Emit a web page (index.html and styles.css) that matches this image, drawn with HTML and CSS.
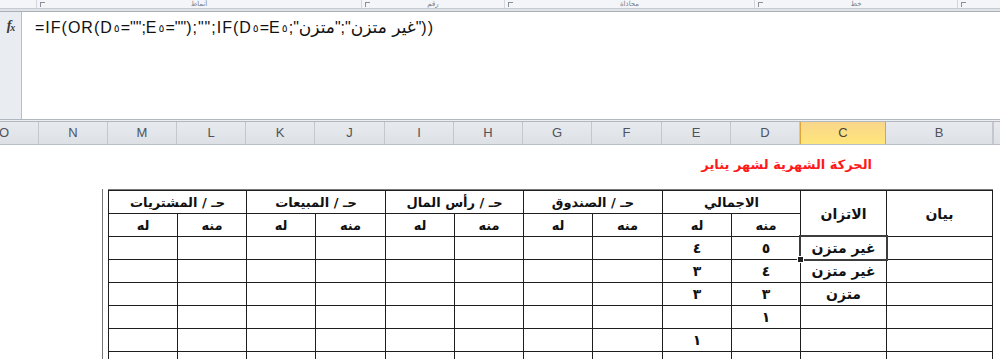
FILE: index.html
```html
<!DOCTYPE html>
<html>
<head>
    <meta charset="utf-8">
    <title>الحركة الشهرية</title>
    <link rel="stylesheet" href="styles.css">
</head>
<body>
    <div class="ribbon">
        <div class="group group-cells"></div>
        <div class="group group-styles"><span class="launcher"></span><span class="group-name">أنماط</span></div>
        <div class="group group-number"><span class="launcher"></span><span class="group-name">رقم</span></div>
        <div class="group group-align"><span class="launcher"></span><span class="group-name">محاذاة</span></div>
        <div class="group group-font"><span class="launcher"></span><span class="group-name">خط</span></div>
        <div class="group group-clip"><span class="launcher"></span></div>
    </div>
    <div class="ribbon-gap"></div>

    <div class="formula-bar">
        <div class="fx">f<sub>x</sub></div>
        <div class="formula" dir="ltr">=IF(OR(D<span class="dg">٥</span>="";E<span class="dg">٥</span>="");"";IF(D<span class="dg">٥</span>=E<span class="dg">٥</span>;"<bdi>متزن</bdi>";"<bdi>غير متزن</bdi>"))</div>
    </div>
    <div class="bar-gap"></div>

    <div class="col-headers">
        <div class="col-head">O</div>
        <div class="col-head">N</div>
        <div class="col-head">M</div>
        <div class="col-head">L</div>
        <div class="col-head">K</div>
        <div class="col-head wide">J</div>
        <div class="col-head">I</div>
        <div class="col-head">H</div>
        <div class="col-head">G</div>
        <div class="col-head wide">F</div>
        <div class="col-head">E</div>
        <div class="col-head">D</div>
        <div class="col-head col-c selected">C</div>
        <div class="col-head col-b">B</div>
        <div class="col-head col-a"></div>
    </div>

    <div class="sheet" dir="rtl">
        <div class="title-row">
            <span class="title">الحركة الشهرية لشهر يناير</span>
        </div>
        <div class="table-wrap">
            <div class="ledger">
                <!-- header -->
                <div class="cell head tall">بيان</div>
                <div class="cell head tall">الاتزان</div>
                <div class="cell head pair">الاجمالي</div>
                <div class="cell head pair">حـ / الصندوق</div>
                <div class="cell head pair">حـ / رأس المال</div>
                <div class="cell head pair">حـ / المبيعات</div>
                <div class="cell head pair">حـ / المشتريات</div>

                <div class="cell head">منه</div><div class="cell head">له</div>
                <div class="cell head">منه</div><div class="cell head">له</div>
                <div class="cell head">منه</div><div class="cell head">له</div>
                <div class="cell head">منه</div><div class="cell head">له</div>
                <div class="cell head">منه</div><div class="cell head">له</div>

                <!-- row 5 -->
                <div class="cell"></div><div class="cell active">غير متزن</div><div class="cell">٥</div><div class="cell">٤</div>
                <div class="cell"></div><div class="cell"></div><div class="cell"></div><div class="cell"></div>
                <div class="cell"></div><div class="cell"></div><div class="cell"></div><div class="cell"></div>
                <!-- row 6 -->
                <div class="cell"></div><div class="cell">غير متزن</div><div class="cell">٤</div><div class="cell">٣</div>
                <div class="cell"></div><div class="cell"></div><div class="cell"></div><div class="cell"></div>
                <div class="cell"></div><div class="cell"></div><div class="cell"></div><div class="cell"></div>
                <!-- row 7 -->
                <div class="cell"></div><div class="cell">متزن</div><div class="cell">٣</div><div class="cell">٣</div>
                <div class="cell"></div><div class="cell"></div><div class="cell"></div><div class="cell"></div>
                <div class="cell"></div><div class="cell"></div><div class="cell"></div><div class="cell"></div>
                <!-- row 8 -->
                <div class="cell"></div><div class="cell"></div><div class="cell">١</div><div class="cell"></div>
                <div class="cell"></div><div class="cell"></div><div class="cell"></div><div class="cell"></div>
                <div class="cell"></div><div class="cell"></div><div class="cell"></div><div class="cell"></div>
                <!-- row 9 -->
                <div class="cell"></div><div class="cell"></div><div class="cell"></div><div class="cell">١</div>
                <div class="cell"></div><div class="cell"></div><div class="cell"></div><div class="cell"></div>
                <div class="cell"></div><div class="cell"></div><div class="cell"></div><div class="cell"></div>
                <!-- row 10 -->
                <div class="cell"></div><div class="cell"></div><div class="cell"></div><div class="cell"></div>
                <div class="cell"></div><div class="cell"></div><div class="cell"></div><div class="cell"></div>
                <div class="cell"></div><div class="cell"></div><div class="cell"></div><div class="cell"></div>
            </div>
            <div class="col-a-edge"></div>
        </div>
    </div>
</body>
</html>
```

FILE: styles.css
```css
html, body {
    margin: 0;
    padding: 0;
    width: 1000px;
    height: 359px;
    overflow: hidden;
    background-color: #fff;
    font-family: "Liberation Sans", "DejaVu Sans", sans-serif;
}

/* ribbon strip, only the group names row is in view */
.ribbon {
    display: flex;
    height: 8px;
    overflow: hidden;
    background-color: #f3f5f8;
    border-bottom: 1px solid #c6cbd2;
}

.group {
    position: relative;
    display: flex;
    justify-content: center;
    align-items: flex-end;
    box-sizing: border-box;
    border-right: 1px solid #d3d7dd;
}

.group-cells { width: 37px; }
.group-styles { width: 325px; }
.group-number { width: 143px; }
.group-align { width: 250px; }
.group-font { width: 203px; }
.group-clip { flex: 1; border-right: none; }

.group-name {
    font-family: "DejaVu Sans", sans-serif;
    font-size: 7px;
    line-height: 8px;
    color: #7a7f88;
}

.launcher {
    position: absolute;
    left: 3px;
    bottom: 1px;
    width: 4px;
    height: 4px;
    border-left: 1px solid #8a9099;
    border-top: 1px solid #8a9099;
}

.ribbon-gap {
    height: 2px;
    background-color: #dfe3e8;
    border-bottom: 1px solid #a9b0b9;
}

/* formula bar */
.formula-bar {
    display: flex;
    height: 107px;
    background-color: #fff;
}

.fx {
    width: 22px;
    box-sizing: border-box;
    background-color: #e9ecf0;
    border-right: 1px solid #b8bec6;
    font-family: "Liberation Serif", serif;
    font-style: italic;
    font-weight: bold;
    font-size: 14px;
    color: #3a3a3a;
    text-align: center;
    padding-top: 6px;
    letter-spacing: -1px;
}

.fx sub {
    font-size: 10px;
    vertical-align: -1px;
}

.formula {
    flex: 1;
    padding: 5px 0 0 13px;
    font-size: 16px;
    letter-spacing: 1px;
    color: #111;
    text-align: left;
}

.formula bdi {
    font-family: "DejaVu Sans", sans-serif;
    font-size: 17px;
    letter-spacing: 0;
}

.dg {
    font-family: "DejaVu Sans", sans-serif;
    font-size: 11px;
    vertical-align: 1px;
    margin: 0 1px;
}

.bar-gap {
    height: 1px;
    background-color: #eceef1;
    border-top: 1px solid #b1b7bf;
    border-bottom: 1px solid #b1b7bf;
}

/* column letters */
.col-headers {
    display: flex;
    height: 22px;
    margin-left: -30px;
    background: linear-gradient(#e8eaee, #dde0e5);
    border-bottom: 1px solid #b9bec6;
}

.col-head {
    flex: 0 0 69px;
    box-sizing: border-box;
    border-right: 1px solid #c4c8ce;
    font-size: 13px;
    line-height: 22px;
    color: #4f535a;
    text-align: center;
}

.col-head.wide { flex-basis: 70px; }
.col-head.col-c { flex-basis: 86px; }
.col-head.col-b { flex-basis: 107px; }
.col-head.col-a { flex-basis: 60px; border-left: 1px solid #c4c8ce; }

.col-head.selected {
    background: linear-gradient(#f9d68b, #ffe67a);
    border-left: 1px solid #e0a534;
    border-right: 1px solid #e0a534;
    color: #4a4535;
}

/* sheet */
.sheet {
    font-family: "DejaVu Sans", sans-serif;
}

.title-row {
    display: flex;
    height: 44px;
    padding-right: 128px;
    align-items: flex-start;
}

.title {
    margin-top: 12px;
    color: #ff1a1a;
    font-weight: bold;
    font-size: 13px;
}

.table-wrap {
    display: flex;
    padding-right: 7px;
}

/* the lines are the grid background showing through 1px gaps */
.ledger {
    display: grid;
    grid-template-columns: 105px 85px 68px 68px 69px 68px 68px 68px 69px 68px 68px 68px;
    grid-auto-rows: 22px;
    gap: 1px;
    padding: 1px;
    background-color: #1e1e1e;
    border-top: 1px solid #7a7a7a;
}

.cell {
    display: flex;
    align-items: center;
    justify-content: center;
    background-color: #fff;
    font-size: 14px;
    font-weight: bold;
    color: #111;
    white-space: nowrap;
    overflow: hidden;
}

.cell.head {
    font-size: 13px;
}

.cell.tall {
    grid-row: span 2;
    font-size: 14px;
}

.cell.pair {
    grid-column: span 2;
}

.cell.active {
    position: relative;
    overflow: visible;
}

.cell.active::after {
    content: "";
    position: absolute;
    top: -2px;
    left: -2px;
    right: -2px;
    bottom: -2px;
    border: 2px solid #3d3d3d;
}

.cell.active::before {
    content: "";
    position: absolute;
    left: -4px;
    bottom: -4px;
    width: 5px;
    height: 5px;
    background-color: #222;
    border: 1px solid #fff;
    z-index: 1;
}

.col-a-edge {
    width: 1px;
    margin-right: 5px;
    background-color: #777;
    height: 200px;
}
```
